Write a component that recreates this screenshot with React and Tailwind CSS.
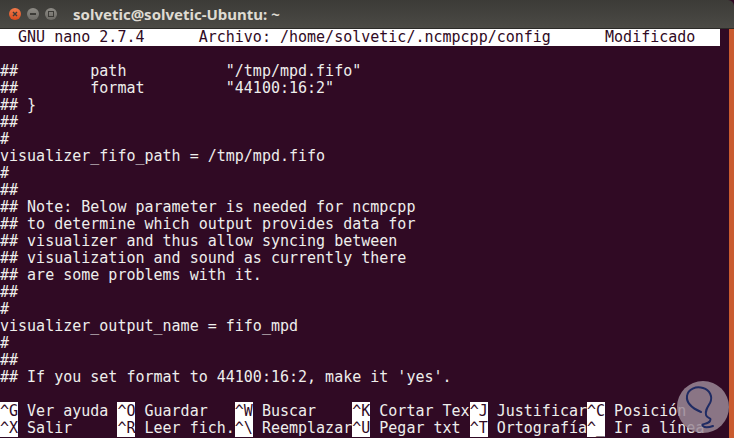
import React from 'react';

const lines = [
  '',
  '##        path           "/tmp/mpd.fifo"',
  '##        format         "44100:16:2"',
  '## }',
  '##',
  '#',
  'visualizer_fifo_path = /tmp/mpd.fifo',
  '#',
  '##',
  '## Note: Below parameter is needed for ncmpcpp',
  '## to determine which output provides data for',
  '## visualizer and thus allow syncing between',
  '## visualization and sound as currently there',
  '## are some problems with it.',
  '##',
  '#',
  'visualizer_output_name = fifo_mpd',
  '#',
  '##',
  "## If you set format to 44100:16:2, make it 'yes'.",
  '',
];

const shortcuts = [
  [['^G', 'Ver ayuda '], ['^O', 'Guardar   '], ['^W', 'Buscar    '], ['^K', 'Cortar Tex'], ['^J', 'Justificar'], ['^C', 'Posición']],
  [['^X', 'Salir     '], ['^R', 'Leer fich.'], ['^\\', 'Reemplazar'], ['^U', 'Pegar txt '], ['^T', 'Ortografía'], ['^_', 'Ir a línea']],
];

const Row = ({ children }) => (
  <div className="h-[17px] leading-[17px] whitespace-pre">{children}</div>
);

const WinButton = ({ close }) => (
  <div
    className={
      close
        ? 'w-[12px] h-[12px] rounded-full bg-gradient-to-b from-[#f07a4a] to-[#d94a1c] flex items-center justify-center'
        : 'w-[12px] h-[12px] rounded-full bg-gradient-to-b from-[#8e8c86] to-[#6c6a65] flex items-center justify-center'
    }
  >
    {close ? (
      <svg width="6" height="6" viewBox="0 0 6 6">
        <path d="M1 1 L5 5 M5 1 L1 5" stroke="#3c3b37" strokeWidth="1.4" />
      </svg>
    ) : null}
  </div>
);

export default function App() {
  return (
    <div className="w-[734px] h-[438px] overflow-hidden relative bg-[#300a24]">
      {/* title bar */}
      <div className="h-[29px] flex items-center bg-gradient-to-b from-[#3c3b37] to-[#4b4a45] border-b border-[#2c2b28] rounded-tr-[6px]">
        <div className="flex items-center gap-[6px] pl-[9px]">
          <WinButton close />
          <div className="w-[12px] h-[12px] rounded-full bg-gradient-to-b from-[#8e8c86] to-[#6c6a65] flex items-center justify-center">
            <div className="w-[6px] h-[2px] bg-[#3c3b37]" />
          </div>
          <div className="w-[12px] h-[12px] rounded-full bg-gradient-to-b from-[#8e8c86] to-[#6c6a65] flex items-center justify-center">
            <div className="w-[6px] h-[6px] border border-[#3c3b37]" />
          </div>
        </div>
        <div className="ml-[16px] text-[15px] font-bold text-[#dfdbd2] font-['Noto_Sans',sans-serif]">
          solvetic@solvetic-Ubuntu: ~
        </div>
      </div>

      {/* terminal body */}
      <div className="flex">
        <div className="w-[729px] font-['DejaVu_Sans_Mono',monospace] text-[15px] text-[#eeeeec]">
          <Row>
            <div className="w-[720px] bg-white text-[#300a24]">
              {'  GNU nano 2.7.4      Archivo: /home/solvetic/.ncmpcpp/config      Modificado'}
            </div>
          </Row>
          {lines.map((l, i) => (
            <Row key={i}>{l}</Row>
          ))}
          {shortcuts.map((row, i) => (
            <Row key={'s' + i}>
              {row.map(([k, label], j) => (
                <span key={j}>
                  <span className="bg-white text-[#300a24]">{k}</span>
                  {' ' + label}
                </span>
              ))}
            </Row>
          ))}
        </div>
        <div className="w-[5px] bg-[#c95b2f] h-[409px]" />
      </div>

      {/* watermark logo */}
      <div className="absolute left-[677px] top-[381px] w-[52px] h-[52px] rounded-full bg-[#9a8896]/85">
        <svg width="52" height="52" viewBox="0 0 52 52">
          <path
            d="M24 31 C17 28 9 23 10 15 C11 8 19 5 26 7 C33 9 36 16 33 22 C30 27 28 30 29 34 C30 38 35 36 33 40 C31 44 23 42 26 45 C28 47 33 46 36 45"
            fill="none"
            stroke="#1f2b63"
            strokeWidth="2"
            strokeLinecap="round"
          />
        </svg>
      </div>
    </div>
  );
}
